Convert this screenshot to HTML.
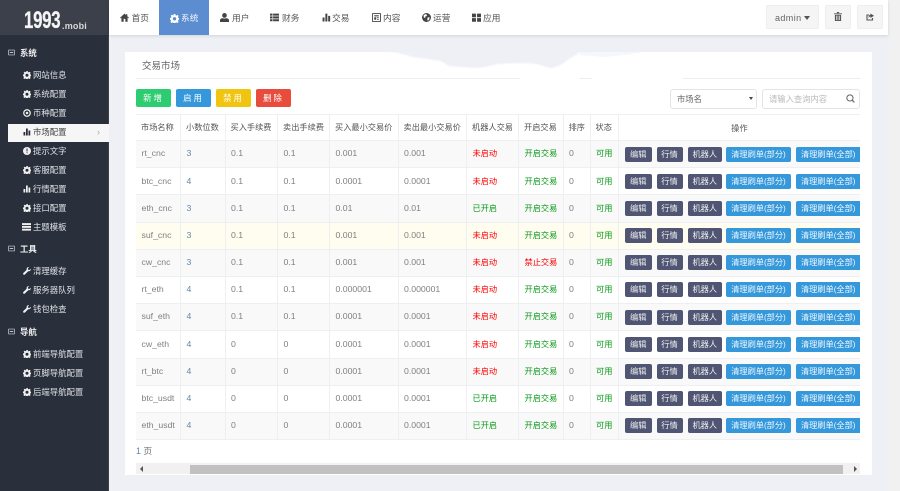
<!DOCTYPE html>
<html lang="zh"><head><meta charset="utf-8"><title>交易市场</title>
<style>
*{box-sizing:border-box}
html,body{margin:0;padding:0;width:900px;height:491px;overflow:hidden;background:#eef0f5;font-family:"Liberation Sans","Noto Sans CJK SC",sans-serif;font-size:8.3px;color:#666}
#w{position:absolute;left:0;top:0;width:900px;height:491px;overflow:hidden;filter:blur(.25px)}
.a{position:absolute;white-space:nowrap}
svg{position:absolute;display:block}
#side{left:0;top:0;width:109px;height:491px;background:#2a2f3c;border-right:1px solid #3c4049}
#logo{left:0;top:0;width:108px;height:35px;background:#3b404b}
.s{color:#dfe1e6;line-height:12px;font-size:8.4px}
.sh{color:#f0f0f0;font-weight:bold}
.n{top:11.5px;line-height:13px;font-size:8.7px;color:#555}
.btn{top:89px;width:35px;height:18px;border-radius:2px;color:#fff;text-align:center;line-height:18px;letter-spacing:2px;font-size:8.4px}
table{position:absolute;left:136px;top:114px;width:724px;border-collapse:collapse;table-layout:fixed}
td,th{border:1px solid #eeeff1;padding:0 0 1.5px 5.5px;height:27.2px;font-weight:normal;white-space:nowrap;overflow:hidden;font-size:8.7px;color:#808080;text-align:left}
th{color:#555;height:26px;font-size:8.2px;padding-left:5px}
tr>*:first-child{border-left:0}tr>*:last-child{border-right:0}
tr:nth-child(even) td{background:#f9f9f9}
tr.h td{background:#fffcf0!important}
td.b{color:#6487ad}td.r{color:#f00;font-size:8.2px}td.g{color:#0a9a1a;font-size:8.2px}
td.o{padding:0;position:relative}
.o i{position:absolute;top:5.5px;height:15px;line-height:15px;border-radius:2px;color:#eee;font-style:normal;text-align:center;font-size:8.2px;background:#4f5573}
.o i.c{background:#3498db;color:#f2f8fd}
.i1{left:6px;width:26.5px}.i2{left:37.5px;width:26px}.i3{left:68.5px;width:34.5px}.i4{left:107px;width:65px}.i5{left:177px;width:64.5px}
</style></head>
<body><div id="w">
<svg width="0" height="0" style="position:absolute"><defs>
<symbol id="gear" viewBox="0 0 16 16"><path fill="currentColor" fill-rule="evenodd" d="M6.5 0h3l.4 2.2 1.4.6L13.2 1.500l2.100 2.100-1.300 1.900.6 1.400 2.200.4v3l-2.200.4-.6 1.400 1.300 1.900-2.100 2.100-1.900-1.300-1.400.6-.4 2.200h-3l-.4-2.200-1.400-.6-1.900 1.300-2.100-2.100 1.300-1.900-.6-1.400L-.2 10V7l2.200-.4.600-1.400-1.300-1.900 2.100-2.100 1.900 1.300 1.400-.6zM8 5.500a3 3 0 1 0 0 6 3 3 0 0 0 0-6z"/></symbol>
<symbol id="bar" viewBox="0 0 16 16"><path fill="currentColor" d="M1 8h3.500v7H1zM6 1h3.500v14H6zM11 5h3.500v10H11z"/></symbol>
<symbol id="wrench" viewBox="0 0 16 16"><path fill="currentColor" d="M15.500 3.500 12.800 6l-2.500-.6-.7-2.400L12.300.4C10 -.4 7.500 1 7.200 3.500c-.1.700 0 1.300.2 1.900L.8 12c-.9.900-.9 2.200 0 3 .8.800 2.100.800 3 0l6.600-6.600c2.900.9 5.700-1.500 5.100-4.500z"/></symbol>
<symbol id="minus" viewBox="0 0 16 16"><path fill="none" stroke="currentColor" stroke-width="1.500" d="M1.500 2.500h13v11h-13z"/><path fill="currentColor" d="M4 7h8v2H4z"/></symbol>
</defs></svg>

<div class="a" id="side"></div>
<div class="a" id="logo"></div>
<div class="a" style="left:24px;top:7px;font-size:24px;line-height:28px;font-weight:bold;color:#f4f4f4;transform:scaleX(.7);transform-origin:0 0;letter-spacing:-.4px;-webkit-text-stroke:.3px #f4f4f4">1993</div>
<div class="a" style="left:62px;top:19.5px;font-size:9px;line-height:12px;font-weight:bold;color:#d8d8d8;letter-spacing:.2px">.mobi</div>

<div class="a" style="left:8px;top:124px;width:101px;height:17.500px;background:#f6f6f7"></div>

<svg style="left:8px;top:49px;color:#d8dade" width="7" height="7"><use href="#minus"/></svg><div class="a s sh" style="left:20px;top:47px">系统</div>
<svg style="left:22.500px;top:71px;color:#f0f0f0" width="8" height="8"><use href="#gear"/></svg><div class="a s" style="left:33px;top:69px">网站信息</div>
<svg style="left:22.500px;top:90px;color:#f0f0f0" width="8" height="8"><use href="#gear"/></svg><div class="a s" style="left:33px;top:88px">系统配置</div>
<svg style="left:22.500px;top:109px" width="8" height="8" viewBox="0 0 16 16"><circle cx="8" cy="8" r="6.500" fill="none" stroke="#f0f0f0" stroke-width="2.500"/><circle cx="8" cy="8" r="2.500" fill="#f0f0f0"/></svg><div class="a s" style="left:33px;top:107px">币种配置</div>
<svg style="left:23px;top:128px;color:#2a2f3c" width="8" height="8"><use href="#bar"/></svg><div class="a s" style="left:33px;top:126px;color:#444">市场配置</div>
<div class="a" style="left:97px;top:126px;color:#aaa;font-size:9px;line-height:12px">›</div>
<svg style="left:22.500px;top:147px" width="8" height="8" viewBox="0 0 16 16"><circle cx="8" cy="8" r="8" fill="#f0f0f0"/><path fill="#2a2f3c" d="M7 3h2v6H7zM7 10.500h2v2H7z"/></svg><div class="a s" style="left:33px;top:145px">提示文字</div>
<svg style="left:22.500px;top:166px;color:#f0f0f0" width="8" height="8"><use href="#gear"/></svg><div class="a s" style="left:33px;top:164px">客服配置</div>
<svg style="left:22.500px;top:185px;color:#f0f0f0" width="8" height="8"><use href="#bar"/></svg><div class="a s" style="left:33px;top:183px">行情配置</div>
<svg style="left:22.500px;top:204px;color:#f0f0f0" width="8" height="8"><use href="#gear"/></svg><div class="a s" style="left:33px;top:202px">接口配置</div>
<svg style="left:22px;top:223px" width="9" height="8" viewBox="0 0 16 14"><path fill="#f0f0f0" d="M0 0h16v3.500H0zM0 5h16v3.500H0zM0 10h16v3.500H0z"/></svg><div class="a s" style="left:33px;top:221px">主题模板</div>

<svg style="left:8px;top:245px;color:#d8dade" width="7" height="7"><use href="#minus"/></svg><div class="a s sh" style="left:20px;top:243px">工具</div>
<svg style="left:22.500px;top:267px;color:#f0f0f0" width="8" height="8"><use href="#wrench"/></svg><div class="a s" style="left:33px;top:265px">清理缓存</div>
<svg style="left:22.500px;top:286px;color:#f0f0f0" width="8" height="8"><use href="#wrench"/></svg><div class="a s" style="left:33px;top:284px">服务器队列</div>
<svg style="left:22.500px;top:305px;color:#f0f0f0" width="8" height="8"><use href="#wrench"/></svg><div class="a s" style="left:33px;top:303px">钱包检查</div>

<svg style="left:8px;top:328px;color:#d8dade" width="7" height="7"><use href="#minus"/></svg><div class="a s sh" style="left:20px;top:326px">导航</div>
<svg style="left:22.500px;top:350px;color:#f0f0f0" width="8" height="8"><use href="#gear"/></svg><div class="a s" style="left:33px;top:348px">前端导航配置</div>
<svg style="left:22.500px;top:369px;color:#f0f0f0" width="8" height="8"><use href="#gear"/></svg><div class="a s" style="left:33px;top:367px">页脚导航配置</div>
<svg style="left:22.500px;top:388px;color:#f0f0f0" width="8" height="8"><use href="#gear"/></svg><div class="a s" style="left:33px;top:386px">后端导航配置</div>

<!-- right gutter -->
<div class="a" style="left:888px;top:0;width:12px;height:491px;background:#f1f1f2"></div>

<!-- top nav -->
<div class="a" style="left:109px;top:0;width:779px;height:35px;background:#fff;box-shadow:0 1px 3px rgba(0,0,0,.12)"></div>
<div class="a" style="left:159px;top:0;width:50px;height:35px;background:#5b8dd0"></div>

<svg style="left:120px;top:13px" width="9" height="9" viewBox="0 0 16 16"><path fill="#444" d="M8 1 0 8.500l1 1L2.500 8v7.500h4v-5h3v5h4V8L15 9.500l1-1L13 5.700V2h-2v1.800z"/></svg><div class="a n" style="left:131.5px">首页</div>
<svg style="left:170px;top:13.5px;color:#fff" width="9" height="9"><use href="#gear"/></svg><div class="a n" style="left:181px;color:#f2f6fb">系统</div>
<svg style="left:220px;top:13px" width="9" height="9" viewBox="0 0 16 16"><path fill="#444" d="M8 0a4 4 0 0 1 4 4.500c0 2-1 4-4 4s-4-2-4-4A4 4 0 0 1 8 0zM5 9c1 1 5 1 6 0 3 .5 5 1.500 5 4v3H0v-3c0-2.500 2-3.500 5-4z"/></svg><div class="a n" style="left:232px">用户</div>
<svg style="left:270px;top:13px" width="9" height="9" viewBox="0 0 16 16"><path fill="#444" d="M0 1h4.500v3.700H0zM5.500 1H16v3.700H5.500zM0 6h4.500v3.700H0zM5.500 6H16v3.700H5.500zM0 11h4.500v3.700H0zM5.500 11H16v3.700H5.500z"/></svg><div class="a n" style="left:282px">财务</div>
<svg style="left:322px;top:13px;color:#444" width="9" height="9"><use href="#bar"/></svg><div class="a n" style="left:332px">交易</div>
<svg style="left:372px;top:13px" width="9" height="9" viewBox="0 0 16 16"><path fill="none" stroke="#444" stroke-width="1.600" d="M1 1h14v14H1z"/><path fill="#444" d="M4 4h8v2H4zM4 7.500h3.500V12H4zM9 7.500h3V9H9zM9 10.500h3V12H9z"/></svg><div class="a n" style="left:383px">内容</div>
<svg style="left:422px;top:13px" width="9" height="9" viewBox="0 0 16 16"><circle cx="8" cy="8" r="8" fill="#444"/><path fill="#fff" d="M3 3.500 7 2l2 1.500-1 2-2 .5-.5 3L3 7.500zM10 8l3.500-.5L13 11l-2.500 3-1-2z"/></svg><div class="a n" style="left:433px">运营</div>
<svg style="left:472px;top:13px" width="9" height="9" viewBox="0 0 16 16"><path fill="#444" d="M0 1h7v6.500H0zM9 1h7v6.500H9zM0 9h7v6.500H0zM9 9h7v6.500H9z"/></svg><div class="a n" style="left:483px">应用</div>

<div class="a" style="left:766px;top:5px;width:53px;height:24px;background:#f5f5f5;border:1px solid #eee;border-radius:2px"></div>
<div class="a" style="left:775px;top:11.5px;color:#666;font-size:9px;line-height:12px;letter-spacing:.4px">admin</div>
<div class="a" style="left:804px;top:16px;width:0;height:0;border:3px solid transparent;border-top:4px solid #555;border-bottom:0"></div>
<div class="a" style="left:825px;top:5px;width:26px;height:24px;background:#f5f5f5;border:1px solid #eee;border-radius:2px"></div>
<svg style="left:834px;top:12px" width="8" height="9" viewBox="0 0 14 16"><path fill="#555" d="M0 2.500h14V4H0zM5 0h4v2H5zM1.500 5h11v11h-11z"/><path fill="#f5f5f5" d="M4 6.500h1.200v8H4zM6.400 6.500h1.200v8H6.400zM8.800 6.500H10v8H8.800z"/></svg>
<div class="a" style="left:857px;top:5px;width:26px;height:24px;background:#f5f5f5;border:1px solid #eee;border-radius:2px"></div>
<svg style="left:866px;top:13px" width="8" height="8" viewBox="0 0 16 16"><path fill="none" stroke="#555" stroke-width="2.200" d="M13 10v4H2V4h4"/><path fill="#555" d="M9 1l7 4.500L9 10V7C7 7 6 8.500 5.500 10.500 5 6 6.500 3.500 9 3.500z"/></svg>

<!-- panel -->
<div class="a" style="left:125px;top:52px;width:747px;height:423px;background:#fff"></div>
<div class="a" style="left:142px;top:59.5px;font-size:9.5px;line-height:13px;color:#666">交易市场</div>
<div class="a" style="left:136px;top:78px;width:384px;height:1px;background:#eceded"></div>
<div class="a" style="left:580px;top:78px;width:12px;height:1px;background:#eceded"></div>
<div class="a" style="left:683px;top:78px;width:177px;height:1px;background:#eceded"></div>
<svg style="left:300px;top:48px" width="350" height="30" viewBox="300 48 350 30"><defs><filter id="sm" x="-5%" y="-20%" width="110%" height="140%"><feGaussianBlur stdDeviation=".8"/></filter></defs><path fill="#eef0f5" filter="url(#sm)" d="M305 46h275v6l-4 3-6 3-6 5-6 3-6 2-6-1-9-3-14-1-26 1-12 3-10 1-26-2-8-5-28-4-18-5-34-2z"/><path fill="#eef0f5" opacity=".5" d="M580 50h60v3l-35 4-25-2z"/></svg>

<div class="a btn" style="left:136px;background:#2ecc71">新增</div>
<div class="a btn" style="left:176px;background:#3498db">启用</div>
<div class="a btn" style="left:216px;background:#f1c40f">禁用</div>
<div class="a btn" style="left:256px;background:#e74c3c">删除</div>

<div class="a" style="left:670px;top:89px;width:87px;height:20px;border:1px solid #e2e4e8;border-radius:3px;background:#fff"></div>
<div class="a" style="left:677px;top:93px;line-height:12px;color:#666">市场名</div>
<div class="a" style="left:749px;top:97px;width:0;height:0;border:2px solid transparent;border-top:3.500px solid #444;border-bottom:0"></div>
<div class="a" style="left:762px;top:89px;width:98px;height:20px;border:1px solid #e2e4e8;border-radius:3px;background:#fff"></div>
<div class="a" style="left:769px;top:93px;line-height:12px;color:#bbb">请输入查询内容</div>
<svg style="left:846px;top:94px" width="9" height="9" viewBox="0 0 16 16"><circle cx="7" cy="7" r="5.500" fill="none" stroke="#666" stroke-width="1.800"/><path stroke="#666" stroke-width="2" d="M11 11l4 4"/></svg>

<table>
<colgroup><col style="width:44.500px"><col style="width:44.500px"><col style="width:52.500px"><col style="width:52px"><col style="width:68.500px"><col style="width:68.500px"><col style="width:52px"><col style="width:44.500px"><col style="width:27px"><col style="width:28.500px"><col></colgroup>
<tr><th>市场名称</th><th>小数位数</th><th>买入手续费</th><th>卖出手续费</th><th>买入最小交易价</th><th>卖出最小交易价</th><th>机器人交易</th><th>开启交易</th><th>排序</th><th>状态</th><th style="text-align:center;padding:0">操作</th></tr>
<tr><td>rt_cnc</td><td class="b">3</td><td>0.1</td><td>0.1</td><td>0.001</td><td>0.001</td><td class="r">未启动</td><td class="g">开启交易</td><td>0</td><td class="g">可用</td><td class="o"><i class="i1">编辑</i><i class="i2">行情</i><i class="i3">机器人</i><i class="i4 c">清理刷单(部分)</i><i class="i5 c">清理刷单(全部)</i></td></tr>
<tr><td>btc_cnc</td><td class="b">4</td><td>0.1</td><td>0.1</td><td>0.0001</td><td>0.0001</td><td class="r">未启动</td><td class="g">开启交易</td><td>0</td><td class="g">可用</td><td class="o"><i class="i1">编辑</i><i class="i2">行情</i><i class="i3">机器人</i><i class="i4 c">清理刷单(部分)</i><i class="i5 c">清理刷单(全部)</i></td></tr>
<tr><td>eth_cnc</td><td class="b">3</td><td>0.1</td><td>0.1</td><td>0.01</td><td>0.01</td><td class="g">已开启</td><td class="g">开启交易</td><td>0</td><td class="g">可用</td><td class="o"><i class="i1">编辑</i><i class="i2">行情</i><i class="i3">机器人</i><i class="i4 c">清理刷单(部分)</i><i class="i5 c">清理刷单(全部)</i></td></tr>
<tr class="h"><td>suf_cnc</td><td class="b">3</td><td>0.1</td><td>0.1</td><td>0.001</td><td>0.001</td><td class="r">未启动</td><td class="g">开启交易</td><td>0</td><td class="g">可用</td><td class="o"><i class="i1">编辑</i><i class="i2">行情</i><i class="i3">机器人</i><i class="i4 c">清理刷单(部分)</i><i class="i5 c">清理刷单(全部)</i></td></tr>
<tr><td>cw_cnc</td><td class="b">3</td><td>0.1</td><td>0.1</td><td>0.001</td><td>0.001</td><td class="r">未启动</td><td class="r">禁止交易</td><td>0</td><td class="g">可用</td><td class="o"><i class="i1">编辑</i><i class="i2">行情</i><i class="i3">机器人</i><i class="i4 c">清理刷单(部分)</i><i class="i5 c">清理刷单(全部)</i></td></tr>
<tr><td>rt_eth</td><td class="b">4</td><td>0.1</td><td>0.1</td><td>0.000001</td><td>0.000001</td><td class="r">未启动</td><td class="g">开启交易</td><td>0</td><td class="g">可用</td><td class="o"><i class="i1">编辑</i><i class="i2">行情</i><i class="i3">机器人</i><i class="i4 c">清理刷单(部分)</i><i class="i5 c">清理刷单(全部)</i></td></tr>
<tr><td>suf_eth</td><td class="b">4</td><td>0.1</td><td>0.1</td><td>0.0001</td><td>0.0001</td><td class="r">未启动</td><td class="g">开启交易</td><td>0</td><td class="g">可用</td><td class="o"><i class="i1">编辑</i><i class="i2">行情</i><i class="i3">机器人</i><i class="i4 c">清理刷单(部分)</i><i class="i5 c">清理刷单(全部)</i></td></tr>
<tr><td>cw_eth</td><td class="b">4</td><td>0</td><td>0</td><td>0.0001</td><td>0.0001</td><td class="r">未启动</td><td class="g">开启交易</td><td>0</td><td class="g">可用</td><td class="o"><i class="i1">编辑</i><i class="i2">行情</i><i class="i3">机器人</i><i class="i4 c">清理刷单(部分)</i><i class="i5 c">清理刷单(全部)</i></td></tr>
<tr><td>rt_btc</td><td class="b">4</td><td>0</td><td>0</td><td>0.0001</td><td>0.0001</td><td class="r">未启动</td><td class="g">开启交易</td><td>0</td><td class="g">可用</td><td class="o"><i class="i1">编辑</i><i class="i2">行情</i><i class="i3">机器人</i><i class="i4 c">清理刷单(部分)</i><i class="i5 c">清理刷单(全部)</i></td></tr>
<tr><td>btc_usdt</td><td class="b">4</td><td>0</td><td>0</td><td>0.0001</td><td>0.0001</td><td class="g">已开启</td><td class="g">开启交易</td><td>0</td><td class="g">可用</td><td class="o"><i class="i1">编辑</i><i class="i2">行情</i><i class="i3">机器人</i><i class="i4 c">清理刷单(部分)</i><i class="i5 c">清理刷单(全部)</i></td></tr>
<tr><td>eth_usdt</td><td class="b">4</td><td>0</td><td>0</td><td>0.0001</td><td>0.0001</td><td class="g">已开启</td><td class="g">开启交易</td><td>0</td><td class="g">可用</td><td class="o"><i class="i1">编辑</i><i class="i2">行情</i><i class="i3">机器人</i><i class="i4 c">清理刷单(部分)</i><i class="i5 c">清理刷单(全部)</i></td></tr>
</table>

<div class="a" style="left:136px;top:445px;line-height:12px;font-size:8.800px;color:#777"><span style="color:#6487ad">1</span> 页</div>

<div class="a" style="left:136px;top:463px;width:724px;height:11px;background:#f1f1f1"></div>
<div class="a" style="left:190px;top:464.5px;width:653px;height:9px;background:#c1c1c1"></div>
<div class="a" style="left:140px;top:466px;width:0;height:0;border:3px solid transparent;border-right:3px solid #555;border-left:0"></div>
<div class="a" style="left:854px;top:466px;width:0;height:0;border:3px solid transparent;border-left:3px solid #555;border-right:0"></div>
</div></body></html>
